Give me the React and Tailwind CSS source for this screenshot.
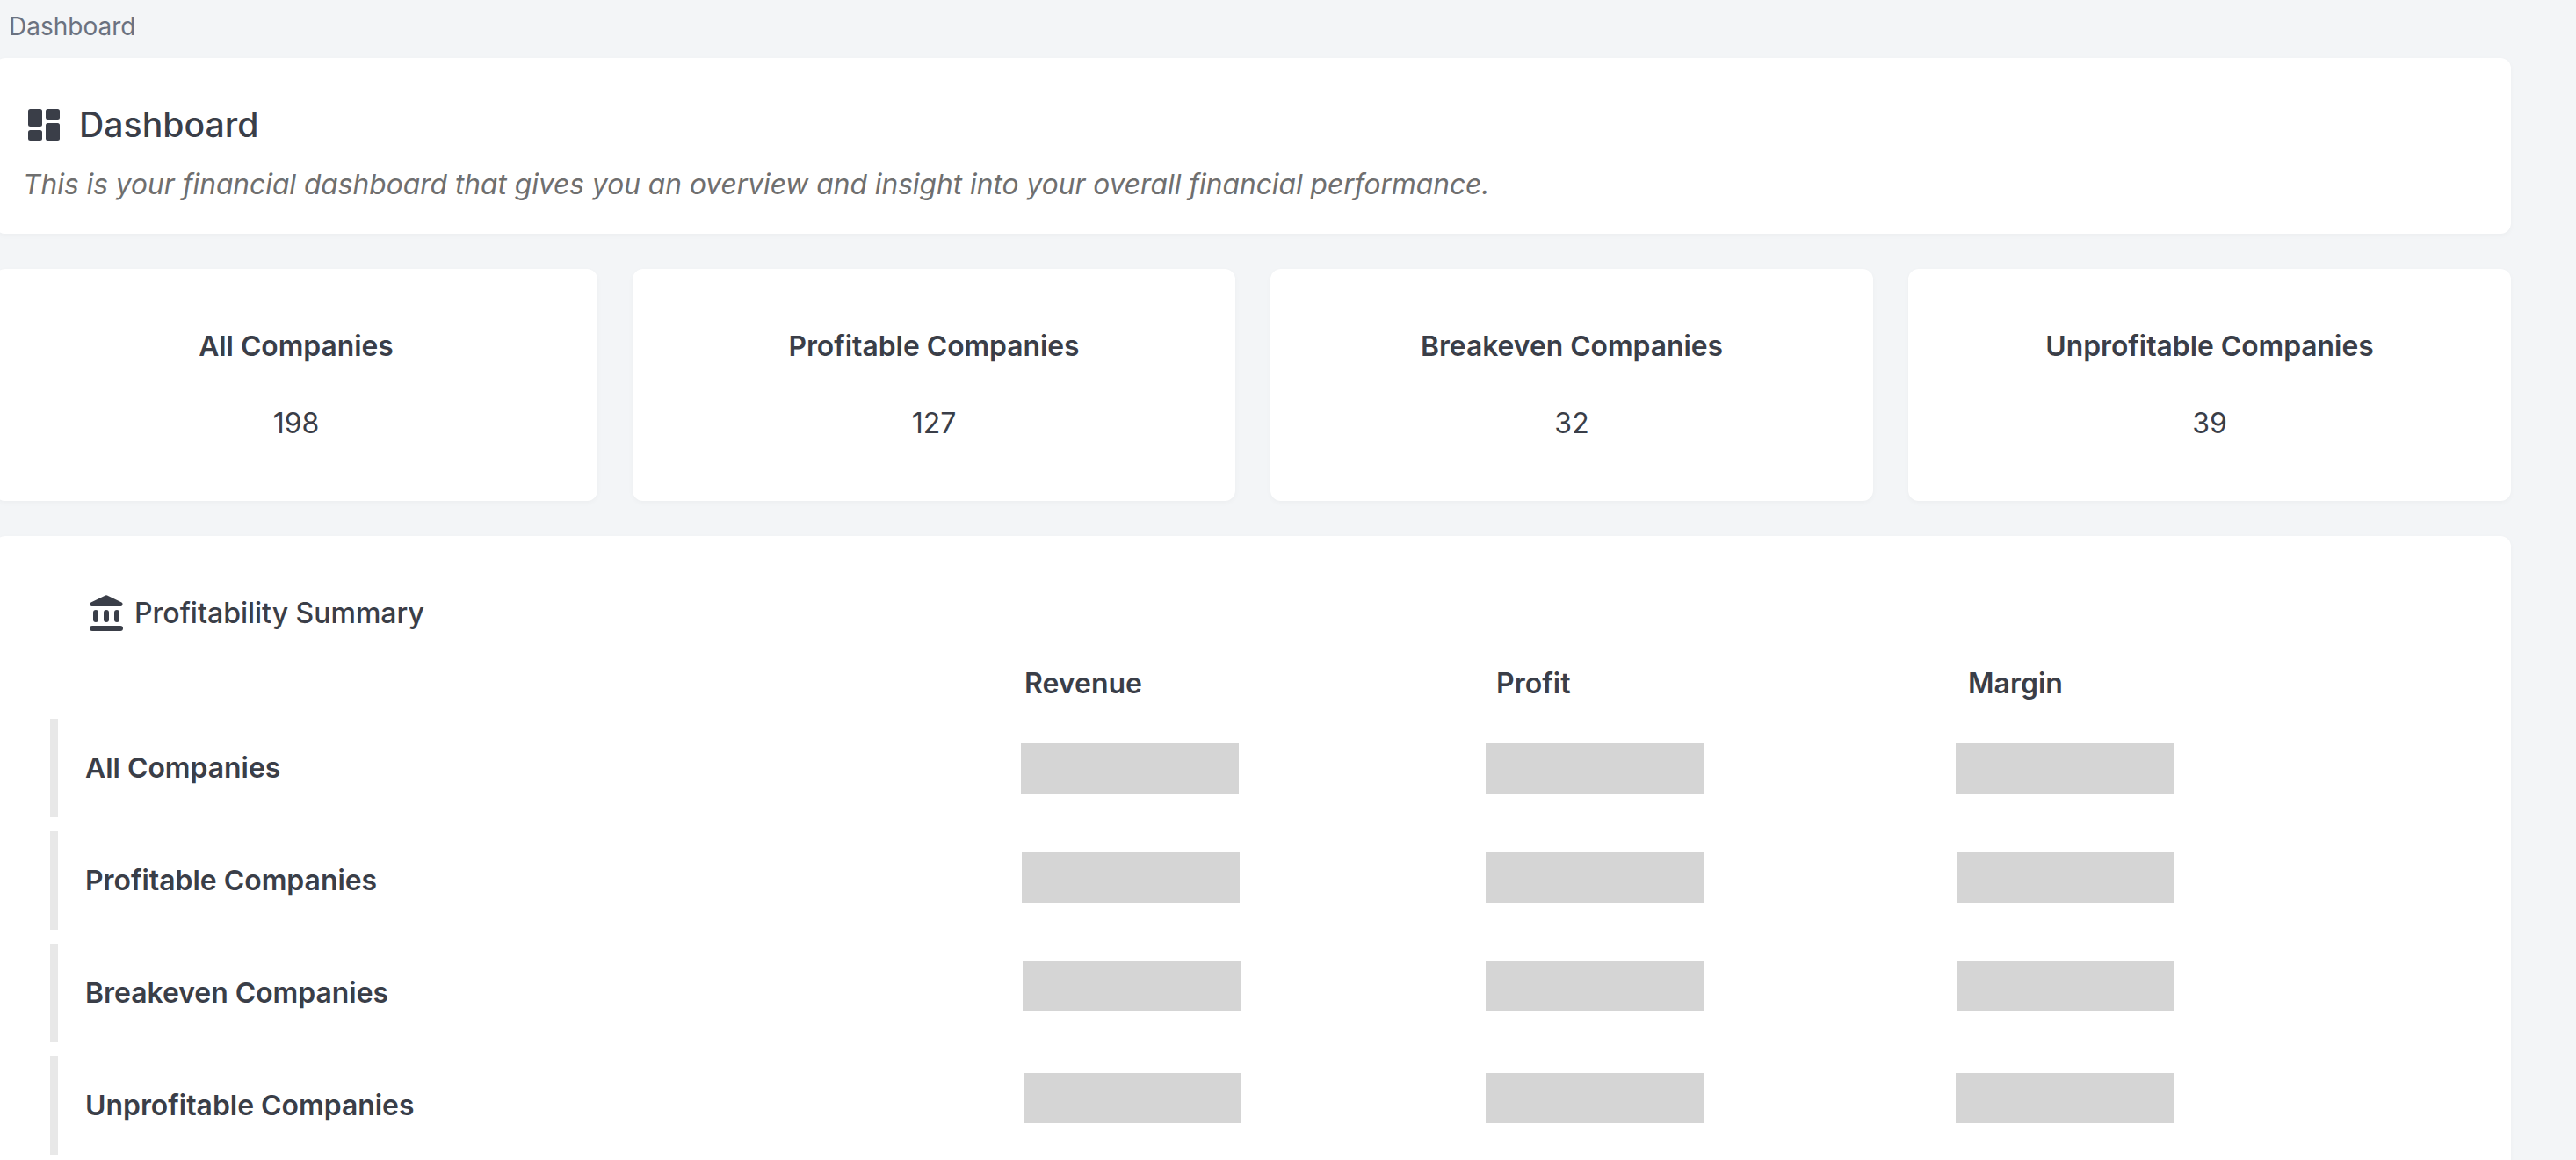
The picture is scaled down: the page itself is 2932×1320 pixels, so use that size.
const stats = [
  { label: 'All Companies', value: 198 },
  { label: 'Profitable Companies', value: 127 },
  { label: 'Breakeven Companies', value: 32 },
  { label: 'Unprofitable Companies', value: 39 },
];

const rows = [
  { label: 'All Companies', pos: 'mb-0', bars: ['ml-[-4px]', 'ml-[-12px]', 'ml-[-14px]'] },
  { label: 'Profitable Companies', pos: 'mb-[8px]', bars: ['ml-[-3px]', 'ml-[-12px]', 'ml-[-13px]'] },
  { label: 'Breakeven Companies', pos: 'mb-[18px]', bars: ['ml-[-2px]', 'ml-[-12px]', 'ml-[-13px]'] },
  { label: 'Unprofitable Companies', pos: 'mb-[17px]', bars: ['ml-[-1px]', 'ml-[-12px]', 'ml-[-14px]'] },
];

function DashboardIcon() {
  return (
    <svg viewBox="0 0 36 36" className="ml-[6px] h-[36px] w-[36px] fill-current">
      <rect x="0" y="0" width="16" height="20" rx="2.5" />
      <rect x="0" y="24" width="16" height="12" rx="2.5" />
      <rect x="20" y="0" width="16" height="12" rx="2.5" />
      <rect x="20" y="16" width="16" height="20" rx="2.5" />
    </svg>
  );
}

function BankIcon() {
  return (
    <svg viewBox="0 0 38 41" className="mt-[-2px] h-[41px] w-[38px] fill-current">
      <path d="M18 .6a2 2 0 0 1 2 0L36.5 8.6A2.4 2.4 0 0 1 35.5 13H2.5A2.4 2.4 0 0 1 1.5 8.6Z" />
      <rect x="4" y="17" width="6" height="14" rx="3" />
      <rect x="16" y="17" width="6" height="14" rx="3" />
      <rect x="28" y="17" width="6" height="14" rx="3" />
      <rect x="0" y="35" width="38" height="6" rx="3" />
    </svg>
  );
}

function App() {
  return (
    <div className="h-[1320px] w-[2932px] overflow-hidden bg-[#f3f5f7] font-['Inter',sans-serif] text-[#3a3e48]">
      <div className="h-[66px] pl-[10px] pt-[14px] text-[28px] leading-[32px] text-[#6b7280]">Dashboard</div>

      <div className="ml-[-6px] w-[2864px]">
        <div className="h-[200px] rounded-[12px] bg-white pl-[32px] pt-[50px] shadow-[0_2px_6px_rgba(0,0,0,0.03)]">
          <div className="flex items-center gap-[22px]">
            <DashboardIcon />
            <h1 className="text-[39.2px] leading-[52px] font-medium">Dashboard</h1>
          </div>
          <p className="mt-[20px] text-[31.7px] leading-[44px] text-[#6f6f6f] italic">
            This is your financial dashboard that gives you an overview and insight into your overall financial performance.
          </p>
        </div>

        <div className="mt-[40px] grid grid-cols-4 gap-[40px]">
          {stats.map((stat) => (
            <div key={stat.label} className="flex h-[264px] flex-col items-center rounded-[12px] bg-white pt-[68px] shadow-[0_2px_6px_rgba(0,0,0,0.03)]">
              <div className="text-[31.8px] leading-[40px] font-semibold">{stat.label}</div>
              <div className="mt-[48px] text-[32px] leading-[40px]">{stat.value}</div>
            </div>
          ))}
        </div>

        <div className="mt-[40px] h-[800px] rounded-[12px] bg-white pl-[63px] pt-[60px] shadow-[0_2px_6px_rgba(0,0,0,0.03)]">
          <div className="flex items-center gap-[13px] pl-[45px]">
            <BankIcon />
            <h2 className="text-[32px] leading-[56px] font-medium">Profitability Summary</h2>
          </div>
          <div className="mt-[32px] flex h-[40px] items-center pl-[1109px] text-[32px] font-semibold">
            <div className="w-[537px]">Revenue</div>
            <div className="w-[537px]">Profit</div>
            <div className="w-[537px]">Margin</div>
          </div>
          <div className="mt-[20px] flex flex-col gap-[16px]">
            {rows.map((row) => (
              <div key={row.label} className="flex h-[112px] items-center border-l-[9px] border-[#e8e8e8] pl-[31px]">
                <div className="w-[1069px] text-[31.9px] font-semibold">{row.label}</div>
                {row.bars.map((bar) => (
                  <div key={bar} className="w-[537px]">
                    <div className={`h-[57px] w-[248px] bg-[#d5d5d5] ${bar} ${row.pos}`}></div>
                  </div>
                ))}
              </div>
            ))}
          </div>
        </div>
      </div>
    </div>
  );
}

export default App;
